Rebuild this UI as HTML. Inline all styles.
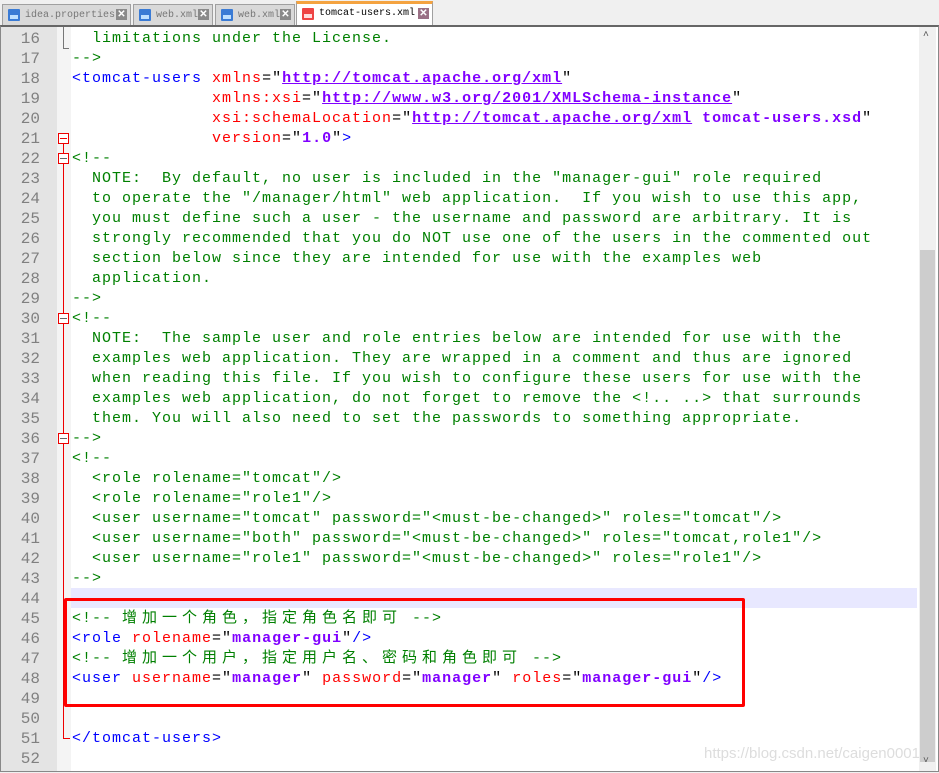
<!DOCTYPE html>
<html><head><meta charset="utf-8"><style>
body{margin:0;width:939px;height:773px;background:#f0f0f0;position:relative;overflow:hidden;font-family:"Liberation Mono","Noto Sans CJK SC",monospace}
.tab{position:absolute;top:4px;height:21px;background:#d9d9d9;border:1px solid #a0a0a0;border-bottom:none;font-size:10px;color:#777;line-height:21px;box-sizing:border-box;padding-left:22px;white-space:nowrap;overflow:hidden}
.tab .ic{position:absolute;left:5px;top:4px;width:12px;height:12px;background:#3a7bd5;border-radius:1px}
.tab .ic:after{content:"";position:absolute;left:2px;top:6px;width:8px;height:4px;background:#bfe0ff}
.tab .x{position:absolute;right:3px;top:4px;width:11px;height:11px;background:#8a8a8a;color:#fff;font-size:10px;line-height:11px;text-align:center;font-family:"Liberation Sans",sans-serif;font-weight:bold}
.act{background:#fff;color:#000;top:1px;height:24px;border-top:3px solid #f4a340;line-height:20px}
.act .ic{background:#e44;}.act .ic:after{background:#fdd}
.act .x{background:#9a7085}
#ed{position:absolute;left:0;top:25px;width:937px;height:744px;background:#fff;border:1px solid #888;border-top:2px solid #666;overflow:hidden}
#gut{position:absolute;left:0;top:0;width:56px;height:744px;background:#e4e4e4}
#fold{position:absolute;left:56px;top:0;width:14px;height:744px;background:#f4f4f4}
.ln{position:absolute;left:0;width:39px;text-align:right;color:#808080;font-size:16px;letter-spacing:0;font-family:"Liberation Mono",monospace}
.l{position:absolute;left:71px;white-space:pre;font-size:15px;letter-spacing:1px;line-height:20px;height:20px}
.c{color:#008000}.t{color:#0000ff}.a{color:#ff0000}.k{color:#000}.v{color:#8000ff;font-weight:bold}.u{color:#8000ff;font-weight:bold;text-decoration:underline}
.cj{letter-spacing:5px}
</style></head><body>
<div class="tab" style="left:2px;width:129px"><span class="ic"></span>idea.properties<span class="x">✕</span></div>
<div class="tab" style="left:133px;width:80px"><span class="ic"></span>web.xml<span class="x">✕</span></div>
<div class="tab" style="left:215px;width:80px"><span class="ic"></span>web.xml<span class="x">✕</span></div>
<div class="tab act" style="left:296px;width:137px"><span class="ic"></span>tomcat-users.xml<span class="x">✕</span></div>
<div id="ed">
<div id="gut"></div><div id="fold"></div>
<div style="position:absolute;left:70px;top:561px;width:846px;height:20px;background:#e8e8ff"></div>
<div style="position:absolute;left:62px;top:0;width:1px;height:21px;background:#777"></div>
<div style="position:absolute;left:62px;top:21px;width:6px;height:1px;background:#777"></div>
<div style="position:absolute;left:62px;top:112px;width:1px;height:600px;background:#e00"></div>
<div style="position:absolute;left:62px;top:711px;width:7px;height:1px;background:#e00"></div>
<div style="position:absolute;left:57px;top:106px;width:9px;height:9px;border:1px solid #e00;background:#fff"></div>
<div style="position:absolute;left:57px;top:126px;width:9px;height:9px;border:1px solid #e00;background:#fff"></div>
<div style="position:absolute;left:57px;top:286px;width:9px;height:9px;border:1px solid #e00;background:#fff"></div>
<div style="position:absolute;left:57px;top:406px;width:9px;height:9px;border:1px solid #e00;background:#fff"></div>
<div style="position:absolute;left:59px;top:111px;width:7px;height:1px;background:#e00"></div>
<div style="position:absolute;left:59px;top:131px;width:7px;height:1px;background:#666"></div>
<div style="position:absolute;left:59px;top:291px;width:7px;height:1px;background:#666"></div>
<div style="position:absolute;left:59px;top:411px;width:7px;height:1px;background:#666"></div>
<div style="position:absolute;left:918px;top:0;width:17px;height:744px;background:#f0f0f0"></div>
<div style="position:absolute;left:919px;top:223px;width:15px;height:512px;background:#cdcdcd"></div>
<div style="position:absolute;left:922px;top:2px;font-size:10px;color:#555;font-family:'Liberation Sans'">˄</div>
<div style="position:absolute;left:922px;top:728px;font-size:10px;color:#555;font-family:'Liberation Sans'">˅</div>
<div id="lines"></div>
<div style="position:absolute;left:63px;top:571px;width:675px;height:103px;border:3px solid #f00;border-radius:2px"></div>
<div style="position:absolute;left:703px;top:718px;font-family:'Liberation Sans',sans-serif;font-size:15px;color:#ddd">https://blog.csdn.net/caigen0001</div>
</div>
<script>
var L=[
'<span class="c">  limitations under the License.</span>',
'<span class="c">--></span>',
'<span class="t">&lt;tomcat-users</span> <span class="a">xmlns</span><span class="k">="</span><span class="u">http://tomcat.apache.org/xml</span><span class="k">"</span>',
'              <span class="a">xmlns:xsi</span><span class="k">="</span><span class="u">http://www.w3.org/2001/XMLSchema-instance</span><span class="k">"</span>',
'              <span class="a">xsi:schemaLocation</span><span class="k">="</span><span class="u">http://tomcat.apache.org/xml</span><span class="v"> tomcat-users.xsd</span><span class="k">"</span>',
'              <span class="a">version</span><span class="k">="</span><span class="v">1.0</span><span class="k">"</span><span class="t">></span>',
'<span class="c">&lt;!--</span>',
'<span class="c">  NOTE:  By default, no user is included in the "manager-gui" role required</span>',
'<span class="c">  to operate the "/manager/html" web application.  If you wish to use this app,</span>',
'<span class="c">  you must define such a user - the username and password are arbitrary. It is</span>',
'<span class="c">  strongly recommended that you do NOT use one of the users in the commented out</span>',
'<span class="c">  section below since they are intended for use with the examples web</span>',
'<span class="c">  application.</span>',
'<span class="c">--></span>',
'<span class="c">&lt;!--</span>',
'<span class="c">  NOTE:  The sample user and role entries below are intended for use with the</span>',
'<span class="c">  examples web application. They are wrapped in a comment and thus are ignored</span>',
'<span class="c">  when reading this file. If you wish to configure these users for use with the</span>',
'<span class="c">  examples web application, do not forget to remove the &lt;!.. ..> that surrounds</span>',
'<span class="c">  them. You will also need to set the passwords to something appropriate.</span>',
'<span class="c">--></span>',
'<span class="c">&lt;!--</span>',
'<span class="c">  &lt;role rolename="tomcat"/></span>',
'<span class="c">  &lt;role rolename="role1"/></span>',
'<span class="c">  &lt;user username="tomcat" password="&lt;must-be-changed>" roles="tomcat"/></span>',
'<span class="c">  &lt;user username="both" password="&lt;must-be-changed>" roles="tomcat,role1"/></span>',
'<span class="c">  &lt;user username="role1" password="&lt;must-be-changed>" roles="role1"/></span>',
'<span class="c">--></span>',
'',
'<span class="c">&lt;!-- <span class="cj">增加一个角色，指定角色名即可</span> --></span>',
'<span class="t">&lt;role</span> <span class="a">rolename</span><span class="k">="</span><span class="v">manager-gui</span><span class="k">"</span><span class="t">/></span>',
'<span class="c">&lt;!-- <span class="cj">增加一个用户，指定用户名、密码和角色即可</span> --></span>',
'<span class="t">&lt;user</span> <span class="a">username</span><span class="k">="</span><span class="v">manager</span><span class="k">"</span> <span class="a">password</span><span class="k">="</span><span class="v">manager</span><span class="k">"</span> <span class="a">roles</span><span class="k">="</span><span class="v">manager-gui</span><span class="k">"</span><span class="t">/></span>',
'','',
'<span class="t">&lt;/tomcat-users></span>',
''];
var h='';
for(var i=0;i<L.length;i++){var y=2+i*20;
h+='<div class="ln" style="top:'+(y+1)+'px">'+(16+i)+'</div><div class="l" style="top:'+y+'px">'+L[i]+'</div>';}
document.getElementById('lines').innerHTML=h;
</script>
</body></html>
